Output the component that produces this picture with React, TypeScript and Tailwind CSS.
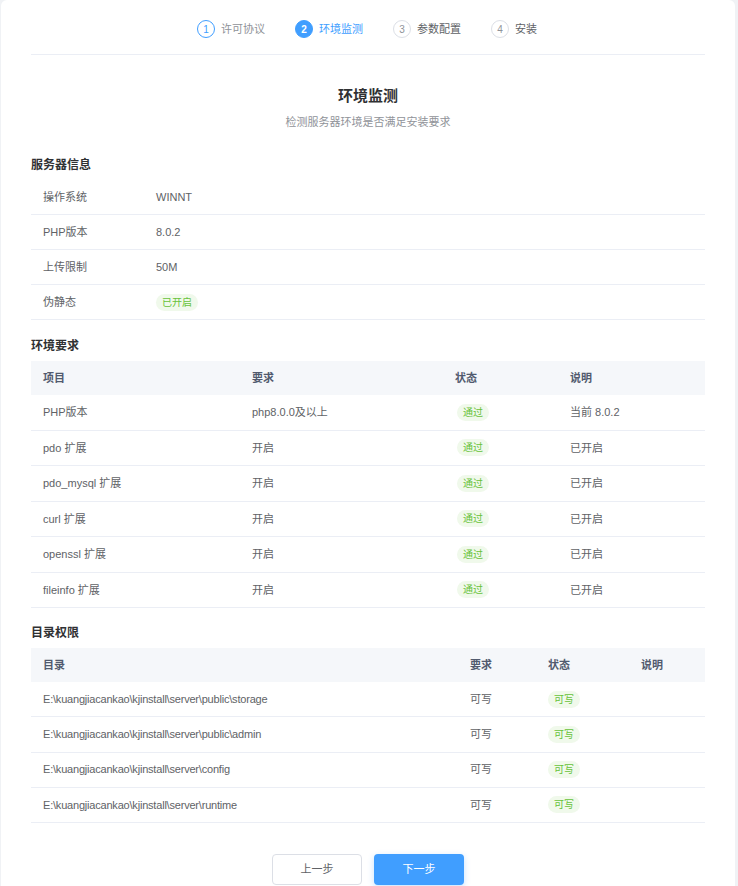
import React from 'react';

const font = { fontFamily: '"Liberation Sans", "Noto Sans CJK SC", sans-serif' };

const steps = [
  { n: 1, label: '许可协议', state: 'done' },
  { n: 2, label: '环境监测', state: 'active' },
  { n: 3, label: '参数配置', state: 'todo' },
  { n: 4, label: '安装', state: 'todo' },
];

const serverInfo: [string, React.ReactNode][] = [
  ['操作系统', 'WINNT'],
  ['PHP版本', '8.0.2'],
  ['上传限制', '50M'],
  ['伪静态', <Badge key="b">已开启</Badge>],
];

const envRows = [
  ['PHP版本', 'php8.0.0及以上', '当前 8.0.2'],
  ['pdo 扩展', '开启', '已开启'],
  ['pdo_mysql 扩展', '开启', '已开启'],
  ['curl 扩展', '开启', '已开启'],
  ['openssl 扩展', '开启', '已开启'],
  ['fileinfo 扩展', '开启', '已开启'],
];

const dirRows = [
  'E:\\kuangjiacankao\\kjinstall\\server\\public\\storage',
  'E:\\kuangjiacankao\\kjinstall\\server\\public\\admin',
  'E:\\kuangjiacankao\\kjinstall\\server\\config',
  'E:\\kuangjiacankao\\kjinstall\\server\\runtime',
];

function Badge({ children }: { children: React.ReactNode }) {
  return (
    <span className="inline-flex h-[17px] items-center rounded-full bg-[#f0f9eb] px-[6px] text-[10px] text-[#67c23a]">
      {children}
    </span>
  );
}

function SectionTitle({ children }: { children: React.ReactNode }) {
  return <div className="h-[18px] text-[12px] font-bold leading-[18px] text-[#303133]">{children}</div>;
}

function Step({ n, label, state }: { n: number; label: string; state: string }) {
  const circle =
    state === 'active'
      ? 'bg-[#409eff] border-[#409eff] text-white font-bold'
      : state === 'done'
        ? 'border-[#409eff] text-[#409eff]'
        : 'border-[#dcdfe6] text-[#909399]';
  const text = state === 'active' ? 'text-[#409eff]' : state === 'done' ? 'text-[#909399]' : 'text-[#606266]';
  return (
    <div className="flex items-center gap-[6px]">
      <span className={`flex h-[18px] w-[18px] items-center justify-center rounded-full border text-[10px] ${circle}`}>{n}</span>
      <span className={`text-[11px] ${text}`}>{label}</span>
    </div>
  );
}

export default function App() {
  return (
    <div className="h-[886px] overflow-hidden bg-[#f0f2f5]" style={font}>
      <div className="ml-[1px] w-[734px] rounded-md bg-white px-[30px] pb-[40px] pt-[20px]">
        <div className="flex justify-center gap-[30px] pr-[2px]">
          {steps.map((s) => (
            <Step key={s.n} {...s} />
          ))}
        </div>
        <div className="mt-[16px] border-t border-[#ebeef5]" />

        <div className="mt-[31px] text-center text-[15px] font-bold leading-[20px] text-[#303133]">环境监测</div>
        <div className="mt-[8px] text-center text-[11px] leading-[16px] text-[#909399]">检测服务器环境是否满足安装要求</div>

        <div className="mt-[26px]">
          <SectionTitle>服务器信息</SectionTitle>
          <div className="mt-[6px]">
            {serverInfo.map(([k, v]) => (
              <div key={k} className="flex h-[35px] items-center border-b border-[#ebeef5] text-[11px] text-[#606266]">
                <div className="w-[125px] pl-[12px]">{k}</div>
                <div>{v}</div>
              </div>
            ))}
          </div>
        </div>

        <div className="mt-[17px]">
          <SectionTitle>环境要求</SectionTitle>
          <div className="mt-[6px] text-[11px]">
            <div className="grid h-[34px] grid-cols-[209px_203px_115px_1fr] items-center bg-[#f5f7fa] font-bold text-[#515a6e]">
              <div className="pl-[12px]">项目</div>
              <div className="pl-[12px]">要求</div>
              <div className="pl-[12px]">状态</div>
              <div className="pl-[12px]">说明</div>
            </div>
            {envRows.map(([a, b, c]) => (
              <div key={a} className="grid h-[35.5px] grid-cols-[209px_203px_115px_1fr] items-center border-b border-[#ebeef5] text-[#606266]">
                <div className="pl-[12px]">{a}</div>
                <div className="pl-[12px]">{b}</div>
                <div className="pl-[14px]">
                  <Badge>通过</Badge>
                </div>
                <div className="pl-[12px]">{c}</div>
              </div>
            ))}
          </div>
        </div>

        <div className="mt-[16px]">
          <SectionTitle>目录权限</SectionTitle>
          <div className="mt-[6px] text-[11px]">
            <div className="grid h-[34px] grid-cols-[427px_78px_93px_1fr] items-center bg-[#f5f7fa] font-bold text-[#515a6e]">
              <div className="pl-[12px]">目录</div>
              <div className="pl-[12px]">要求</div>
              <div className="pl-[12px]">状态</div>
              <div className="pl-[12px]">说明</div>
            </div>
            {dirRows.map((d) => (
              <div key={d} className="grid h-[35.25px] grid-cols-[427px_78px_93px_1fr] items-center border-b border-[#ebeef5] text-[#606266]">
                <div className="pl-[12px] tracking-[-0.2px]">{d}</div>
                <div className="pl-[12px]">可写</div>
                <div className="pl-[12px]">
                  <Badge>可写</Badge>
                </div>
                <div className="pl-[12px]"></div>
              </div>
            ))}
          </div>
        </div>

        <div className="mt-[31px] flex justify-center gap-[12px]">
          <button className="h-[31px] w-[90px] rounded-[4px] border border-[#dcdfe6] bg-white text-[11px] text-[#606266]">上一步</button>
          <button className="h-[31px] w-[90px] rounded-[4px] bg-[#409eff] text-[11px] text-white shadow-[0_2px_6px_rgba(64,158,255,0.3)]">下一步</button>
        </div>
      </div>
    </div>
  );
}
